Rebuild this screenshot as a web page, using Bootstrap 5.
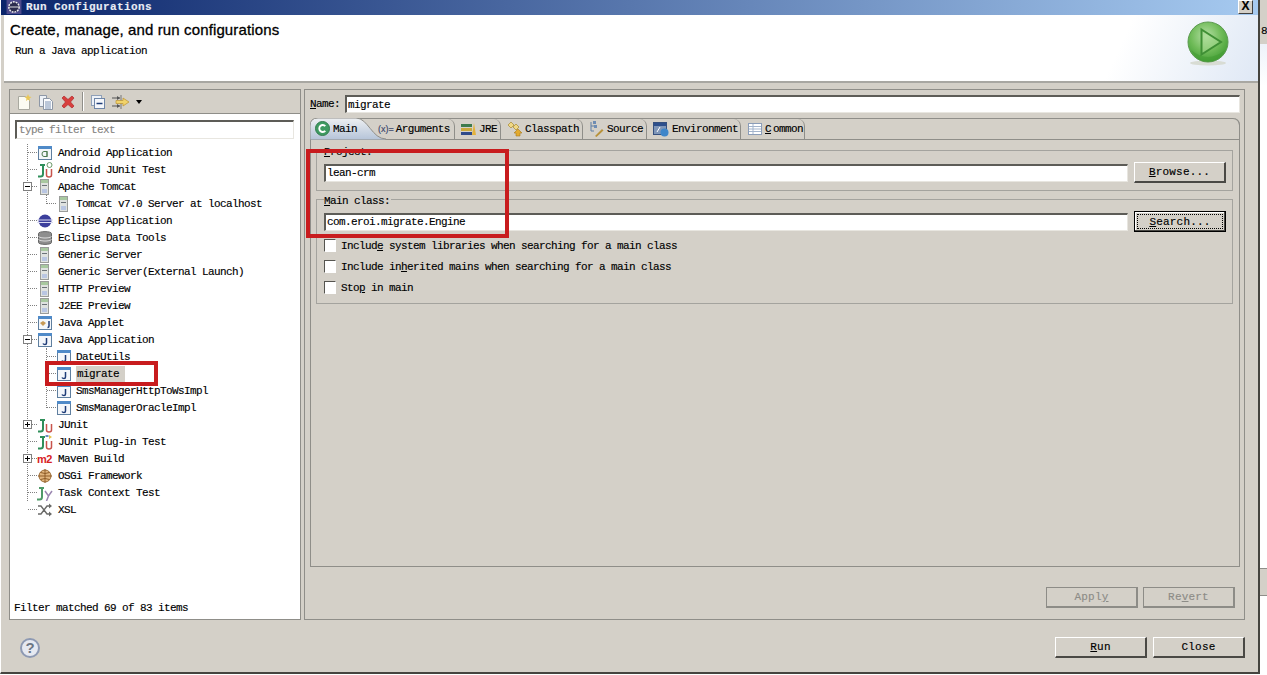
<!DOCTYPE html>
<html lang="en">
<head>
<meta charset="utf-8">
<title>Run Configurations</title>
<link href="https://cdn.jsdelivr.net/npm/bootstrap@5.3.0/dist/css/bootstrap.min.css" rel="stylesheet">
<style>
html,body{margin:0;height:675px;overflow:hidden;background:#fff}
body{font:11px/14px "Liberation Mono",monospace;letter-spacing:-.6px;color:#000;-webkit-text-stroke:.15px}
u{text-underline-offset:1px}
.stage{height:675px;width:1267px}
.win{width:1260px;height:674px;background:#d4d0c8;border-right:2px solid #45443f;border-bottom:2px solid #45443f;border-left:1px solid #fff}
.tbar{height:15px;background:linear-gradient(90deg,#0a246a,#a6caf0);padding:0 0 1px 5px;color:#e8ecf4;font-weight:700;letter-spacing:.4px}
.tclose{width:15px;height:14px;margin:0 5px 0 0;background:#d4d0c8;border:1px solid;border-color:#fff #404040 #404040 #fff;color:#000;font:700 12px/11px "Liberation Sans",sans-serif;letter-spacing:0;text-align:center}
.thead{height:68px;margin-left:3px;padding:7px 0 0 6px;background:linear-gradient(115deg,#fff 88%,#dfe8f5 100%);border-bottom:2px solid #a8a7a2}
.thead h1{font:400 15px/16px "Liberation Sans",sans-serif;letter-spacing:.13px;-webkit-text-stroke:.3px #000;margin:0 0 6px}
.thead p{margin:0 0 0 5px}
.runpic{width:48px;height:46px;margin:-2px 26px 0 0}
.mainrow{height:537px;padding:6px 0 0 8px;gap:3px}
.pane{border:1px solid #8f8e89}
.lpane{width:292px;background:#fff}
.ltools{height:24px;background:#d4d0c8;border-bottom:1px solid #8f8e89;padding-left:6px;gap:6px;flex:none}
.tsep{width:2px;height:19px;border-left:1px solid #8f8e89;border-right:1px solid #fff}
.tri{width:0;height:0;border:3px solid transparent;border-top:4px solid #000;border-bottom:0}
.field{background:#fff;border-style:solid;border-width:2px 1px 1px 2px;border-color:#5d5c57 #e8e6e0 #e8e6e0 #5d5c57;border-radius:0;height:18px;min-height:0;padding:0 1px;font:inherit;letter-spacing:inherit;color:#000;box-shadow:none}
.field:focus{box-shadow:none;border-color:#5d5c57 #e8e6e0 #e8e6e0 #5d5c57}
.filter{margin:6px 6px 5px 5px;width:279px;height:19px;padding-left:2px;flex:none}
.filter::placeholder{color:#85847f}
.treebox{flex:1 1 0;margin-left:17px}
.treev{border-left:1px dotted #808080;height:357px;margin-top:8px}
.trow{height:17px;white-space:nowrap}
.treev>.trow:first-child{margin-top:-8px}
.cn{height:0;border-top:1px dotted #808080;width:9px;flex:none}
.cn.sh{width:5px}
.ex{width:9px;height:9px;margin-left:-5px;border:1px solid #808080;background:#fff;position:relative;flex:none}
.ex::before{content:"";position:absolute;left:1px;right:1px;top:3px;height:1px;background:#000}
.ex.pl::after{content:"";position:absolute;top:1px;bottom:1px;left:3px;width:1px;background:#000}
.ico{width:16px;height:16px;flex:none;margin-right:5px}
.lvl{border-left:1px dotted #808080;margin-left:18px}
.lvl .ico{margin-right:4px}
.lvlA{height:9px;margin-bottom:8px}
.lvlB{height:60px;margin-bottom:8px}
.sel{background:#d4d0c8;padding:1px;width:49px;height:16px}
.status{padding:0 0 4px 4px}
.rpane{width:941px;padding:5px 4px 11px 5px}
.namefield{width:895px;height:18px;flex:none}
.folder{height:449px;flex:none;margin-top:5px;border:1px solid #8f8e89;border-top:0;border-radius:9px 7px 0 0}
.strip{height:22px;border-top:1px solid #8f8e89;border-bottom:1px solid #8f8e89;border-right:1px solid #8f8e89;border-radius:9px 7px 0 0;margin:0 -1px;flex-wrap:nowrap}
.strip .nav-link{position:relative;height:20px;padding:0 0 0 6px;color:#000;border-right:1px solid #8f8e89;border-top-right-radius:7px;gap:2px;white-space:nowrap}
.strip .tabon{width:65px;padding:0 0 0 23px;border:0}
.tabon svg.bg{position:absolute;left:0;top:-1px;width:76px;height:22px}
.tabon svg.ic{position:absolute;left:5px;top:2px;width:15px;height:15px}
.tabon b{position:relative;font-weight:400}
.xeq{font:9px "Liberation Sans",sans-serif;letter-spacing:0;color:#39456b}
.tic{width:16px;height:16px;flex:none}
.strip .w1{width:80px;padding-left:3px}
.w2{width:46px}.w3{width:82px}.w4{width:64px}.w5{width:94px}.w6{width:64px}
.w5 .tic{margin-right:1px}
.fset{border:1px solid #a4a39e;margin:4px 6px 0 5px;padding:0 6px 7px 7px}
.fset>legend{float:none;width:auto;margin:0;padding:0 1px 0 0;font-size:inherit;height:12px;line-height:16px;background:none}
.fset.second{margin-top:2px;padding-bottom:5px}
.frow{margin-top:6px;gap:6px}
.frow .field{flex:1 1 0;height:18px}
.xbtn{width:92px;height:21px;padding:1px 0 0;background:#d4d0c8;border-style:solid;border-width:1px 2px 2px 1px;border-color:#fff #4a4945 #4a4945 #fff;border-radius:0;color:#000;font:inherit;letter-spacing:.2px;line-height:15px;flex:none}
.xbtn:hover,.xbtn:active{background:#d4d0c8;color:#000;border-color:#fff #4a4945 #4a4945 #fff}
.xbtn.dflt{border:1px solid #000;box-shadow:inset -1px -1px 0 #4a4945,inset 1px 1px 0 #fff;padding:2px;line-height:14px}
.xbtn.dflt span{display:block;height:15px;border:1px dotted #000}
.xbtn.off{color:#8d8c87;opacity:1}
.chk{height:21px;min-height:0;gap:5px}
.chk .form-check-input{width:12px;height:13px;margin:0;border-radius:0;border-style:solid;border-width:1px;border-color:#55544f #fff #fff #55544f;background-color:#fff;float:none;flex:none}
.firstchk{margin-top:3px!important}
.btnrow{margin-top:20px;gap:5px;padding-right:5px}
.foot{height:52px;padding:3px 13px 0 19px;gap:6px}
.helpc{width:20px;height:20px;background:#e6e9f1;border:2px solid #8d99b3;color:#6d7684;font:700 15px/16px "Liberation Sans",sans-serif;letter-spacing:0;text-align:center;margin-right:auto;-webkit-text-stroke:0}
.sliver{width:7px;height:675px;flex:none}
.sa{height:44px;background:#d4d0c8;padding-top:24px;padding-left:1px;overflow:hidden}
.sb{height:524px;background:linear-gradient(#eef3fa,#fff 8%)}
.sc{height:28px;background:#d4d0c8;border-top:1px solid #8f8e89;border-bottom:1px solid #8f8e89}
.anno{position:absolute;border:4px solid #c81c1e;pointer-events:none}
.a1{left:306px;top:149px;width:203px;height:89px}
.a2{left:45px;top:361px;width:113px;height:25px}
</style>
</head>
<body>
<svg width="0" height="0" class="position-absolute">
<defs>
<linearGradient id="tg" x1="0" y1="0" x2="0" y2="1"><stop offset="0" stop-color="#eef0f2"/><stop offset="1" stop-color="#b4c3d8"/></linearGradient>
<radialGradient id="gb" cx=".45" cy=".35" r=".7"><stop offset="0" stop-color="#b5dfa5"/><stop offset=".55" stop-color="#6fbb58"/><stop offset="1" stop-color="#3c9a30"/></radialGradient>
<symbol id="i-win" viewBox="0 0 16 16"><rect x="1.500" y="1.500" width="13" height="13" fill="#f4f7fb" stroke="#5f7f9f"/><rect x="1" y="1" width="14" height="3" fill="#4f8ac8"/></symbol>
<symbol id="i-jav" viewBox="0 0 16 16"><use href="#i-win"/><path d="M9.500 6v5q0 1.500-1.500 1.500T6 11.500" fill="none" stroke="#1f3d78" stroke-width="1.500"/></symbol>
<symbol id="i-and" viewBox="0 0 16 16"><use href="#i-win"/><path d="M10 6.500H7q-2 0-2 2.500t2 2.500h3z" fill="none" stroke="#4d7a50"/><path d="M10 6v6" stroke="#4d7a50"/></symbol>
<symbol id="i-ju" viewBox="0 0 16 16"><path d="M3 3h5M6 3v9q0 2.500-2.500 2.500H1" fill="none" stroke="#2f8f5a" stroke-width="2"/><path d="M9.500 7v6q0 2 2.500 2t2.500-2V7" fill="none" stroke="#c8544c" stroke-width="1.500"/></symbol>
<symbol id="i-jua" viewBox="0 0 16 16"><use href="#i-ju"/><circle cx="12.500" cy="3" r="2.500" fill="#fff" stroke="#6b9a68"/></symbol>
<symbol id="i-jup" viewBox="0 0 16 16"><use href="#i-ju"/><path d="M8.500 1h3v2h-3z" fill="#6d8fc0"/><path d="M12 1l3 2-3 2z" fill="#e5c44c"/></symbol>
<symbol id="i-jut" viewBox="0 0 16 16"><path d="M2 3h5M5 3v9q0 2.500-2.500 2.500H0" fill="none" stroke="#4f9a68" stroke-width="2"/><path d="M8 6l3.500 5 3.500-5M11.500 11l-2 5" fill="none" stroke="#9a86b0" stroke-width="1.500"/></symbol>
<symbol id="i-srv" viewBox="0 0 16 16"><rect x="3.500" y=".5" width="8" height="15" fill="#dfe2e0" stroke="#9a9c9a"/><rect x="4" y="1" width="7" height="3" fill="#a8c8a0"/><rect x="5" y="6" width="5" height="1" fill="#6b7278"/><rect x="5" y="10" width="5" height="4" fill="#b9c6e2"/></symbol>
<symbol id="i-ecl" viewBox="0 0 16 16"><circle cx="8" cy="8" r="6.500" fill="#3c3f9c"/><path d="M0 7h16M0 9.500h16" stroke="#d9daf0"/></symbol>
<symbol id="i-dat" viewBox="0 0 16 16"><path d="M1.500 3.500C1.500 1 14.500 1 14.500 3.500v9c0 2.500-13 2.500-13 0z" fill="#8e8e8e" stroke="#666"/><path d="M1.500 6.500c2 2 11 2 13 0M1.500 9.500c2 2 11 2 13 0" fill="none" stroke="#dcdcdc"/></symbol>
<symbol id="i-apl" viewBox="0 0 16 16"><use href="#i-win"/><path d="M3 8l3-2 3 2-3 3z" fill="#c79a56"/><path d="M12 6v5q0 1.500-1.500 1.500" fill="none" stroke="#1f3d78" stroke-width="1.500"/></symbol>
<symbol id="i-osg" viewBox="0 0 16 16"><circle cx="8" cy="8" r="6" fill="#e2b67e" stroke="#9b6b34"/><path d="M1 8h14M8 1v14M3.500 4.500q4.500 2 9 0M3.500 11.500q4.500-2 9 0" fill="none" stroke="#8f5d28"/></symbol>
<symbol id="i-xsl" viewBox="0 0 16 16"><path d="M1 4h3l6 8h3M1 12h3l6-8h3" fill="none" stroke="#6a6a68" stroke-width="1.400"/><path d="M12 1.500l3 2.500-3 2.500zM12 9.500l3 2.500-3 2.500z" fill="#6a6a68"/></symbol>
</defs>
</svg>

<div class="stage d-flex">
<div class="win flex-shrink-0 d-flex flex-column">
  <div class="tbar d-flex align-items-center">
    <svg width="16" height="14" viewBox="0 0 16 15"><rect width="16" height="15" fill="#4d4a8c"/><circle cx="8" cy="7.500" r="5.500" fill="#2c2c4e" stroke="#eee" stroke-width="1.600" stroke-dasharray="2 1"/><path d="M3 7.500h10" stroke="#eee"/></svg>
    <span class="flex-grow-1 ms-1">Run Configurations</span>
    <div class="tclose">X</div>
  </div>
  <div class="thead d-flex justify-content-between">
    <div>
      <h1>Create, manage, and run configurations</h1>
      <p>Run a Java application</p>
    </div>
    <svg class="runpic" viewBox="0 0 46 46"><ellipse cx="23" cy="43" rx="18" ry="2.500" fill="#d8dcd4"/><circle cx="23" cy="22" r="20" fill="url(#gb)" stroke="#5c9a50"/><path d="M16.500 9.500L36 22 16.500 34.500z" fill="#a9dc93" fill-opacity=".55" stroke="#3f8f35" stroke-width="2"/><path d="M6 30q17 14 34 0-6 12-17 12T6 30z" fill="#3f9a30" fill-opacity=".5"/></svg>
  </div>
  <div class="mainrow d-flex">
    <div class="pane lpane d-flex flex-column">
      <div class="ltools d-flex align-items-center">
        <svg class="tic" viewBox="0 0 16 16"><path d="M2.500 2.500h7l4 4v9h-11z" fill="#fbfbf2" stroke="#a9a9a0"/><path d="M12 0l1 2.500L15.500 3 13.500 4.500 14 7l-2-1.500L10 7l.5-2.500L8.500 3 11 2.500z" fill="#e9c757"/></svg>
        <svg class="tic" viewBox="0 0 16 16"><path d="M1.500 1.500h7v11h-7z" fill="#eef2f7" stroke="#8d97a6"/><path d="M5.500 4.500h6l3 3v8h-9z" fill="#fbfcfd" stroke="#8d97a6"/><path d="M7 8h6M7 10h6M7 12h6M7 14h6" stroke="#7d93b5"/></svg>
        <svg class="tic" viewBox="0 0 16 16"><path d="M2 4l2-2 4 3.500L12 2l2 2-3.500 4 3.500 4-2 2-4-3.500L4 14l-2-2 3.500-4z" fill="#d8403e" stroke="#b02a2c" stroke-width=".7"/></svg>
        <div class="tsep"></div>
        <svg class="tic" viewBox="0 0 16 16"><rect x="1.500" y="1.500" width="10" height="10" fill="#eef2f8" stroke="#8fa0b8"/><rect x="4.500" y="4.500" width="10" height="10" fill="#f5f7fb" stroke="#6f86a8"/><path d="M6.500 9.500h6" stroke="#1f3d78" stroke-width="1.500"/></svg>
        <svg width="18" height="16" viewBox="0 0 18 16"><path d="M0 4h8M0 12h8" stroke="#555"/><path d="M5 2l3 2-3 2zM5 10l3 2-3 2z" fill="#555"/><path d="M9 1v14" stroke="#777"/><path d="M4 6.500h7V4l6 4-6 4V9.500H4z" fill="#f1d36b" stroke="#bb9430" stroke-width=".7"/></svg>
        <div class="tri"></div>
      </div>
      <input class="form-control field filter" placeholder="type filter text" aria-label="filter">
      <div class="treebox">
        <div class="treev">
          <div class="trow d-flex align-items-center"><span class="cn"></span><svg class="ico"><use href="#i-and"/></svg>Android Application</div>
          <div class="trow d-flex align-items-center"><span class="cn"></span><svg class="ico"><use href="#i-jua"/></svg>Android JUnit Test</div>
          <div class="trow d-flex align-items-center"><span class="ex"></span><span class="cn sh"></span><svg class="ico"><use href="#i-srv"/></svg>Apache Tomcat</div>
          <div class="lvl lvlA">
            <div class="trow d-flex align-items-center"><span class="cn"></span><svg class="ico"><use href="#i-srv"/></svg>Tomcat v7.0 Server at localhost</div>
          </div>
          <div class="trow d-flex align-items-center"><span class="cn"></span><svg class="ico"><use href="#i-ecl"/></svg>Eclipse Application</div>
          <div class="trow d-flex align-items-center"><span class="cn"></span><svg class="ico"><use href="#i-dat"/></svg>Eclipse Data Tools</div>
          <div class="trow d-flex align-items-center"><span class="cn"></span><svg class="ico"><use href="#i-srv"/></svg>Generic Server</div>
          <div class="trow d-flex align-items-center"><span class="cn"></span><svg class="ico"><use href="#i-srv"/></svg>Generic Server(External Launch)</div>
          <div class="trow d-flex align-items-center"><span class="cn"></span><svg class="ico"><use href="#i-srv"/></svg>HTTP Preview</div>
          <div class="trow d-flex align-items-center"><span class="cn"></span><svg class="ico"><use href="#i-srv"/></svg>J2EE Preview</div>
          <div class="trow d-flex align-items-center"><span class="cn"></span><svg class="ico"><use href="#i-apl"/></svg>Java Applet</div>
          <div class="trow d-flex align-items-center"><span class="ex"></span><span class="cn sh"></span><svg class="ico"><use href="#i-jav"/></svg>Java Application</div>
          <div class="lvl lvlB">
            <div class="trow d-flex align-items-center"><span class="cn"></span><svg class="ico"><use href="#i-jav"/></svg>DateUtils</div>
            <div class="trow d-flex align-items-center"><span class="cn"></span><svg class="ico"><use href="#i-jav"/></svg><span class="sel">migrate</span></div>
            <div class="trow d-flex align-items-center"><span class="cn"></span><svg class="ico"><use href="#i-jav"/></svg>SmsManagerHttpToWsImpl</div>
            <div class="trow d-flex align-items-center"><span class="cn"></span><svg class="ico"><use href="#i-jav"/></svg>SmsManagerOracleImpl</div>
          </div>
          <div class="trow d-flex align-items-center"><span class="ex pl"></span><span class="cn sh"></span><svg class="ico"><use href="#i-ju"/></svg>JUnit</div>
          <div class="trow d-flex align-items-center"><span class="cn"></span><svg class="ico"><use href="#i-jup"/></svg>JUnit Plug-in Test</div>
          <div class="trow d-flex align-items-center"><span class="ex pl"></span><span class="cn sh"></span><svg class="ico" viewBox="0 0 16 16"><text x="0" y="12" font-family="Liberation Sans" font-weight="700" font-size="11" fill="#d8231f" letter-spacing="-.5">m2</text></svg>Maven Build</div>
          <div class="trow d-flex align-items-center"><span class="cn"></span><svg class="ico"><use href="#i-osg"/></svg>OSGi Framework</div>
          <div class="trow d-flex align-items-center"><span class="cn"></span><svg class="ico"><use href="#i-jut"/></svg>Task Context Test</div>
          <div class="trow d-flex align-items-center"><span class="cn"></span><svg class="ico"><use href="#i-xsl"/></svg>XSL</div>
        </div>
      </div>
      <div class="status">Filter matched 69 of 83 items</div>
    </div>
    <div class="pane rpane d-flex flex-column">
      <div class="d-flex align-items-center justify-content-between">
        <label for="nm"><u>N</u>ame:</label>
        <input id="nm" class="form-control field namefield" value="migrate">
      </div>
      <div class="folder">
        <ul class="nav strip">
          <li class="nav-item"><a class="nav-link tabon d-flex align-items-center" href="#">
            <svg class="bg" viewBox="0 0 76 22"><path d="M0 22V8Q0 0 8 0H46C58 0 62 21 76 21V22Z" fill="url(#tg)" stroke="#8f8e89"/></svg>
            <svg class="ic" viewBox="0 0 16 16"><circle cx="8" cy="8" r="7.500" fill="#3f9a62" stroke="#2f7a4a"/><path d="M11 5.500A3.700 3.700 0 1 0 11 10.500" fill="none" stroke="#fff" stroke-width="2"/></svg>
            <b>Main</b></a></li>
          <li class="nav-item"><a class="nav-link w1 d-flex align-items-center" href="#"><span class="xeq">(x)=</span>Arguments</a></li>
          <li class="nav-item"><a class="nav-link w2 d-flex align-items-center" href="#">
            <svg class="tic" viewBox="0 0 16 16"><rect x="0" y="3" width="11" height="3" fill="#3d7a4c"/><rect x="0" y="7" width="11" height="3" fill="#c9a83c"/><rect x="0" y="11" width="11" height="3" fill="#2f4a8a"/><path d="M13 2l2 12h-4z" fill="#e3b23c"/></svg>JRE</a></li>
          <li class="nav-item"><a class="nav-link w3 d-flex align-items-center" href="#">
            <svg class="tic" viewBox="0 0 16 16"><path d="M4 1l3 3-3 3-3-3zM9 3l3 3-3 3-3-3z" fill="#f0d886" stroke="#a88a30" stroke-width=".7"/><path d="M11 8l4 4h-2v3h-4v-3H7z" fill="#e3aa2e" stroke="#a8781c" stroke-width=".6"/></svg>Classpath</a></li>
          <li class="nav-item"><a class="nav-link w4 d-flex align-items-center" href="#">
            <svg class="tic" viewBox="0 0 16 16"><path d="M2 1v9h3M2 5h3" fill="none" stroke="#5f7fa5"/><rect x="4" y="0" width="3" height="3" fill="#6f8db3"/><rect x="5" y="4" width="3" height="3" fill="#6f8db3"/><path d="M6 15l7-7 1.500 1.500-7 6.500z" fill="#b8923a"/></svg>Source</a></li>
          <li class="nav-item"><a class="nav-link w5 d-flex align-items-center" href="#">
            <svg class="tic" viewBox="0 0 16 16"><rect x=".5" y="1.500" width="13" height="12" fill="#7f96b8" stroke="#35507f"/><rect x="1" y="2" width="12" height="3" fill="#2d4f8c"/><path d="M4 11l3-5" stroke="#fff"/><circle cx="11.500" cy="11.500" r="4" fill="#3f86c9"/></svg>Environment</a></li>
          <li class="nav-item"><a class="nav-link w6 d-flex align-items-center" href="#">
            <svg class="tic" viewBox="0 0 16 16"><rect x="1.500" y="2.500" width="13" height="11" fill="#fff" stroke="#8b9db8"/><path d="M2 5.500h12M2 8h12M2 10.500h12M6 3v10" stroke="#a3b4cc"/></svg><u>C</u>ommon</a></li>
        </ul>
        <fieldset class="fset">
          <legend><u>P</u>roject:</legend>
          <div class="frow d-flex align-items-center">
            <input class="form-control field" value="lean-crm" aria-label="Project">
            <button type="button" class="btn xbtn"><u>B</u>rowse...</button>
          </div>
        </fieldset>
        <fieldset class="fset second">
          <legend><u>M</u>ain class:</legend>
          <div class="frow d-flex align-items-center">
            <input class="form-control field" value="com.eroi.migrate.Engine" aria-label="Main class">
            <button type="button" class="btn xbtn dflt"><span><u>S</u>earch...</span></button>
          </div>
          <div class="form-check chk d-flex align-items-center p-0 m-0 firstchk"><input class="form-check-input" type="checkbox" id="c1"><label for="c1">Includ<u>e</u> system libraries when searching for a main class</label></div>
          <div class="form-check chk d-flex align-items-center p-0 m-0"><input class="form-check-input" type="checkbox" id="c2"><label for="c2">Include in<u>h</u>erited mains when searching for a main class</label></div>
          <div class="form-check chk d-flex align-items-center p-0 m-0"><input class="form-check-input" type="checkbox" id="c3"><label for="c3">Sto<u>p</u> in main</label></div>
        </fieldset>
      </div>
      <div class="btnrow d-flex justify-content-end">
        <button type="button" class="btn xbtn off" disabled>Appl<u>y</u></button>
        <button type="button" class="btn xbtn off" disabled>Re<u>v</u>ert</button>
      </div>
    </div>
  </div>
  <div class="foot d-flex align-items-center">
    <div class="helpc rounded-circle">?</div>
    <button type="button" class="btn xbtn"><u>R</u>un</button>
    <button type="button" class="btn xbtn">Close</button>
  </div>
</div>
<div class="sliver">
  <div class="sa">8</div>
  <div class="sb"></div>
  <div class="sc"></div>
</div>
</div>
<div class="anno a1"></div>
<div class="anno a2"></div>
<script src="https://cdn.jsdelivr.net/npm/bootstrap@5.3.0/dist/js/bootstrap.bundle.min.js"></script>
</body>
</html>
